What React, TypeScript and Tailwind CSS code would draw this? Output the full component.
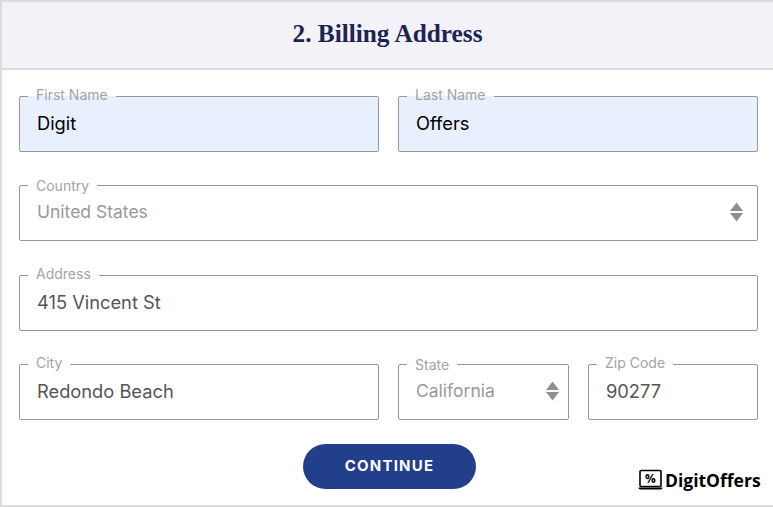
import React from 'react';

const bodyFont = "font-['Inter','Noto_Sans',sans-serif]";

type FieldProps = {
    label: string;
    children: React.ReactNode;
    className?: string;
    filled?: boolean;
    labelClass?: string;
};

const Field: React.FC<FieldProps> = ({ label, children, className = '', filled = false, labelClass = '' }) => (
    <fieldset className={`relative h-[66px] min-w-0 rounded-[2px] border border-[#979797] ${filled ? 'bg-[#e8f0fe]' : 'bg-white'} ${className}`}>
        <legend className={`ml-[8px] px-[8px] text-[14px] leading-[20px] text-[#a3a3a3] ${labelClass}`}>{label}</legend>
        {children}
    </fieldset>
);

const Arrows = ({ className }: { className: string }) => (
    <svg className={`pointer-events-none absolute top-[7px] ${className}`} width="13" height="20" viewBox="0 0 13 20">
        <path d="M6.5 0.5L13 9H0z" fill="#8f8f8f" />
        <path d="M0 11h13L6.5 19.5z" fill="#8f8f8f" />
    </svg>
);

const inputClass = 'block h-[34px] w-full bg-transparent px-[17px] text-[18.3px] text-[#555] outline-none';
const selectClass = 'block h-[34px] w-full appearance-none bg-transparent px-[17px] text-[17.5px] text-[#999] outline-none';

const App: React.FC = () => {
    return (
        <div className={`relative h-[507px] w-[773px] overflow-hidden bg-white ${bodyFont}`}>
            <div className="h-[507px] border-y-2 border-l-2 border-[#dcdcdc]">
                <div className="box-content flex h-[66px] items-center justify-center border-b-2 border-[#dcdcdc] bg-[#f3f2f8]">
                    <h2 className="-mt-[2px] font-['Liberation_Serif',serif] text-[25.3px] font-bold text-[#1c2452]">2. Billing Address</h2>
                </div>

                <form className="flex flex-col gap-[23px] pl-[17px] pr-[15px] pt-[16px]">
                    <div className="grid grid-cols-2 gap-[19px]">
                        <Field label="First Name" filled labelClass="-translate-y-[1px]">
                            <input className={`${inputClass} !text-black`} defaultValue="Digit" />
                        </Field>
                        <Field label="Last Name" filled labelClass="-translate-y-[1px]">
                            <input className={`${inputClass} !text-black`} defaultValue="Offers" />
                        </Field>
                    </div>

                    <Field label="Country" labelClass="translate-y-[1px]">
                        <select className={selectClass} defaultValue="United States">
                            <option>United States</option>
                        </select>
                        <Arrows className="right-[14px]" />
                    </Field>

                    <Field label="Address" className="mt-[1px]" labelClass="-translate-y-[1px]">
                        <input className={inputClass} defaultValue="415 Vincent St" />
                    </Field>

                    <div className="grid grid-cols-[360px_171px_170px] gap-[19px]">
                        <Field label="City" labelClass="-translate-y-[1px]">
                            <input className={inputClass} defaultValue="Redondo Beach" />
                        </Field>
                        <Field label="State" labelClass="translate-y-[1px]">
                            <select className={selectClass} defaultValue="California">
                                <option>California</option>
                            </select>
                            <Arrows className="right-[9px]" />
                        </Field>
                        <Field label="Zip Code" labelClass="-translate-y-[1px]">
                            <input className={inputClass} defaultValue="90277" />
                        </Field>
                    </div>

                    <div className="flex justify-center pl-[2px]">
                        <button type="button" className="mt-[1px] h-[45px] w-[173px] rounded-full bg-[#223f8c] text-[15px] font-bold tracking-[1.2px] text-white">
                            CONTINUE
                        </button>
                    </div>
                </form>
            </div>

            {/* watermark */}
            <div className="absolute left-[638px] top-[469px] flex items-center gap-[2px]">
                <svg width="25" height="22" viewBox="0 0 25 22" fill="none">
                    <rect x="2" y="1.5" width="21" height="16" rx="1" stroke="#000" strokeWidth="1.6" />
                    <path d="M0.5 18.5h24c0 1.2-.8 2-2 2h-20c-1.2 0-2-.8-2-2z" fill="#000" />
                    <text x="12.5" y="14" textAnchor="middle" fontSize="12" fontWeight="700" fontFamily="'Open Sans',sans-serif" fill="#000">%</text>
                </svg>
                <span className="-mt-[1px] font-['Open_Sans',sans-serif] text-[17.5px] font-bold leading-[22px] text-black">DigitOffers</span>
            </div>
        </div>
    );
};

export default App;
